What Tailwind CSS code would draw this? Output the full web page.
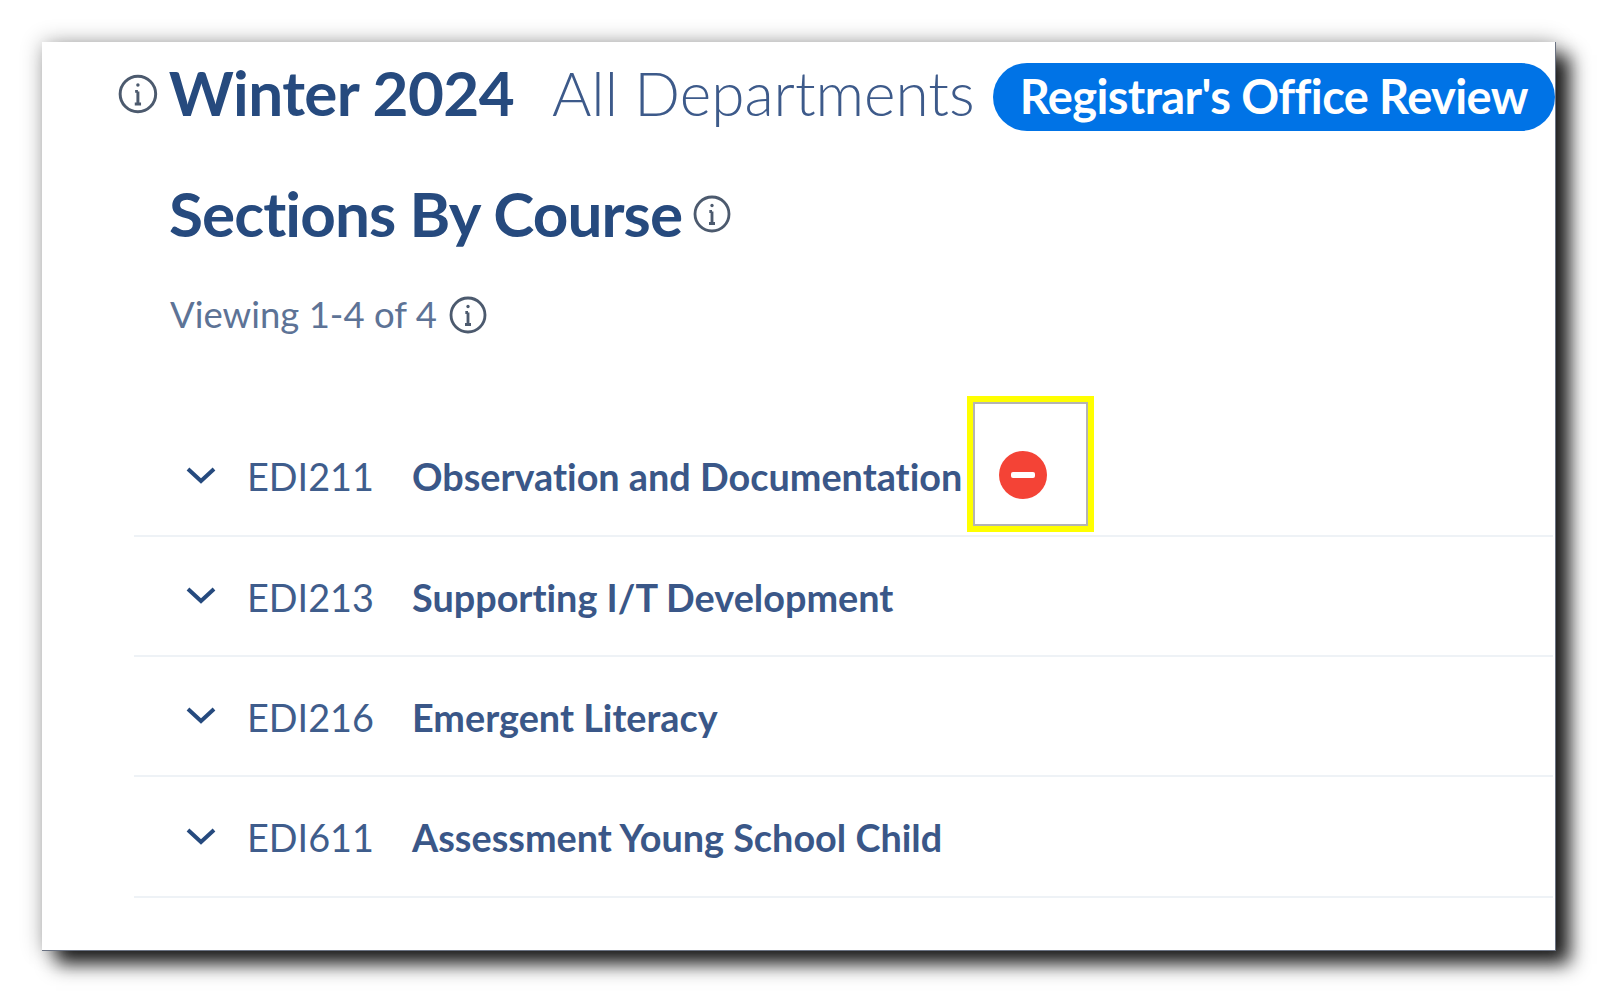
<!DOCTYPE html>
<html lang="en">
<head>
  <meta charset="UTF-8" />
  <meta name="viewport" content="width=device-width, initial-scale=1.0" />
  <title>Sections By Course</title>
  <script src="https://cdn.jsdelivr.net/npm/@tailwindcss/browser@4"></script>
</head>
<body class="bg-white h-[995px] overflow-hidden font-['Lato',sans-serif] text-[#264a7e]">

  <div class="ml-[42px] mt-[42px] w-[1514px] h-[909px] bg-white border-b border-r border-gray-500 shadow-[14px_13px_18px_rgba(0,0,0,0.88),0_0_20px_rgba(0,0,0,0.3)] inline-block align-top overflow-hidden">

    <div class="flex items-center h-[89px] pl-[75px] pt-[10px]">
      <svg class="w-[42px] h-[42px] text-[#4c5a6e] mr-[10px] mt-[4px]" viewBox="0 0 24 24" fill="none" stroke="currentColor" stroke-width="1.7">
        <circle cx="12" cy="12" r="10.2" />
        <path d="M12 10.5v7.2M10.4 10.5H12M10.2 17.7h3.6" />
        <circle cx="12" cy="6.9" r="1" fill="currentColor" stroke="none" />
      </svg>
      <h1 class="text-[62px] font-bold leading-none tracking-[-0.6px] text-[#264a7e] whitespace-nowrap">Winter 2024</h1>
      <span class="text-[60.3px] font-light leading-none ml-[38px] mt-[4px] text-[#3d5a8a] whitespace-nowrap">All Departments</span>
      <span class="ml-[18px] mt-[10px] h-[68px] w-[565px] rounded-full bg-[#0073e6] text-white font-bold text-[47px] flex items-center justify-center whitespace-nowrap tracking-[-0.6px]">Registrar's Office Review</span>
    </div>

    <div class="flex items-center pl-[127px] mt-[51px]">
      <h2 class="text-[62px] font-bold leading-none tracking-[-0.9px] whitespace-nowrap">Sections By Course</h2>
      <svg class="w-[40px] h-[40px] text-[#4c5a6e] ml-[10px] mt-[2px]" viewBox="0 0 24 24" fill="none" stroke="currentColor" stroke-width="1.7">
        <circle cx="12" cy="12" r="10.2" />
        <path d="M12 10.5v7.2M10.4 10.5H12M10.2 17.7h3.6" />
        <circle cx="12" cy="6.9" r="1" fill="currentColor" stroke="none" />
      </svg>
    </div>

    <div class="flex items-center pl-[128px] mt-[49px] text-[36.5px] leading-none text-[#5d7396]">
      <span class="whitespace-nowrap">Viewing 1-4 of 4</span>
      <svg class="w-[40px] h-[40px] text-[#4c5a6e] ml-[11px] mt-[2px]" viewBox="0 0 24 24" fill="none" stroke="currentColor" stroke-width="1.7">
        <circle cx="12" cy="12" r="10.2" />
        <path d="M12 10.5v7.2M10.4 10.5H12M10.2 17.7h3.6" />
        <circle cx="12" cy="6.9" r="1" fill="currentColor" stroke="none" />
      </svg>
    </div>

    <div class="ml-[92px] mr-[2px] mt-[81px] relative [font-variant-ligatures:none]">
      <div class="flex items-center h-[121px] pt-[4px] border-b-2 border-[#eef2f6] text-[37.8px] pl-[52px]">
        <svg class="w-[30px] h-[20px] text-[#264a7e] mb-[6px]" viewBox="0 0 30 20" fill="none" stroke="currentColor" stroke-width="4"><path d="M2 4l13 12L28 4" /></svg>
        <span class="ml-[31px] w-[165px] text-[#3f5d8c] whitespace-nowrap">EDI211</span>
        <span class="font-bold whitespace-nowrap text-[#3a5788]">Observation and Documentation</span>
      </div>
      <div class="flex items-center h-[120px] pt-[4px] border-b-2 border-[#eef2f6] text-[37.8px] pl-[52px]">
        <svg class="w-[30px] h-[20px] text-[#264a7e] mb-[6px]" viewBox="0 0 30 20" fill="none" stroke="currentColor" stroke-width="4"><path d="M2 4l13 12L28 4" /></svg>
        <span class="ml-[31px] w-[165px] text-[#3f5d8c] whitespace-nowrap">EDI213</span>
        <span class="font-bold whitespace-nowrap text-[#3a5788]">Supporting I/T Development</span>
      </div>
      <div class="flex items-center h-[120px] pt-[4px] border-b-2 border-[#eef2f6] text-[37.8px] pl-[52px]">
        <svg class="w-[30px] h-[20px] text-[#264a7e] mb-[6px]" viewBox="0 0 30 20" fill="none" stroke="currentColor" stroke-width="4"><path d="M2 4l13 12L28 4" /></svg>
        <span class="ml-[31px] w-[165px] text-[#3f5d8c] whitespace-nowrap">EDI216</span>
        <span class="font-bold whitespace-nowrap text-[#3a5788]">Emergent Literacy</span>
      </div>
      <div class="flex items-center h-[121px] pt-[4px] border-b-2 border-[#eef2f6] text-[37.8px] pl-[52px]">
        <svg class="w-[30px] h-[20px] text-[#264a7e] mb-[6px]" viewBox="0 0 30 20" fill="none" stroke="currentColor" stroke-width="4"><path d="M2 4l13 12L28 4" /></svg>
        <span class="ml-[31px] w-[165px] text-[#3f5d8c] whitespace-nowrap">EDI611</span>
        <span class="font-bold whitespace-nowrap text-[#3a5788]">Assessment Young School Child</span>
      </div>

      <!-- highlight box over first row -->
      <div class="absolute left-[833px] top-[-20px] w-[127px] h-[136px] border-[6px] border-[#ffff00] bg-white">
        <div class="w-full h-full border-2 border-[#b4b4b4] pl-[24px] pt-[47px]">
          <div class="w-[48px] h-[48px] rounded-full bg-[#f44336] flex items-center justify-center">
            <div class="w-[24px] h-[6px] rounded-[2px] bg-white"></div>
          </div>
        </div>
      </div>
    </div>
  </div>

</body>
</html>
